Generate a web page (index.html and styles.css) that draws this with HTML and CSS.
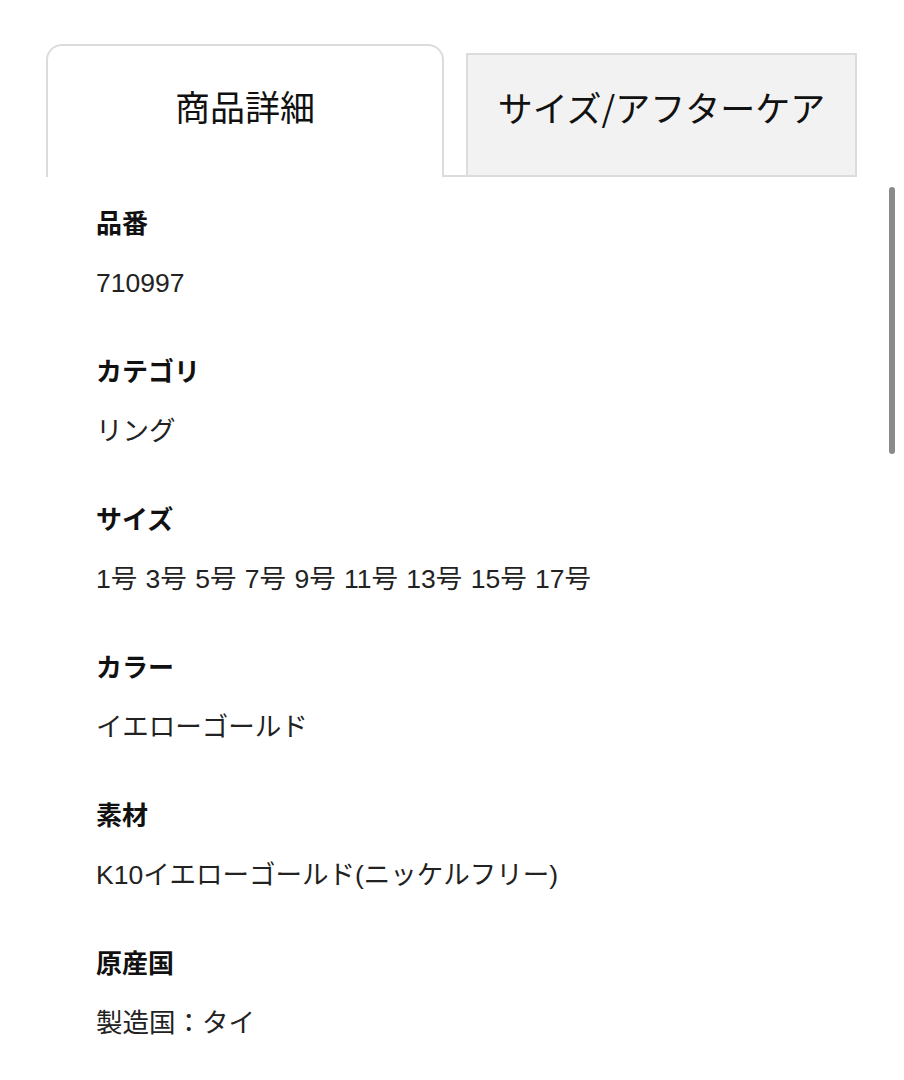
FILE: index.html
```html
<!DOCTYPE html>
<html lang="ja">
<head>
<meta charset="utf-8">
<link rel="stylesheet" href="styles.css">
</head>
<body>
<div class="page">
  <div class="tabs">
    <div class="tab tab-active">商品詳細</div>
    <div class="tab-gap"></div>
    <div class="tab tab-inactive">サイズ/アフターケア</div>
  </div>
  <dl class="details">
    <div class="item"><dt>品番</dt><dd>710997</dd></div>
    <div class="item"><dt>カテゴリ</dt><dd>リング</dd></div>
    <div class="item"><dt>サイズ</dt><dd>1号 3号 5号 7号 9号 11号 13号 15号 17号</dd></div>
    <div class="item"><dt>カラー</dt><dd>イエローゴールド</dd></div>
    <div class="item"><dt>素材</dt><dd>K10イエローゴールド(ニッケルフリー)</dd></div>
    <div class="item"><dt>原産国</dt><dd>製造国：タイ</dd></div>
  </dl>
  <div class="scrollbar"></div>
</div>
</body>
</html>
```

FILE: styles.css
```css
html, body {
  margin: 0;
  padding: 0;
  background: #fff;
}
body {
  font-family: "Liberation Sans", "Noto Sans CJK JP", sans-serif;
  color: #222;
}
.page {
  position: relative;
  width: 904px;
  height: 1080px;
  overflow: hidden;
}
.tabs {
  display: flex;
  align-items: flex-end;
  padding: 44px 0 0 46px;
}
.tab {
  box-sizing: border-box;
  display: flex;
  align-items: center;
  justify-content: center;
  font-family: "Noto Sans CJK JP", sans-serif;
  font-size: 35px;
  color: #111;
}
.tab-active {
  width: 398px;
  height: 133px;
  border: 2px solid #dcdcdc;
  border-bottom: none;
  border-radius: 16px 16px 0 0;
  padding-bottom: 12px;
}
.tab-gap {
  width: 22px;
  height: 0;
  border-bottom: 2px solid #dcdcdc;
}
.tab-inactive {
  width: 391px;
  height: 124px;
  border: 2px solid #dcdcdc;
  background: #f2f2f2;
  padding-bottom: 18px;
}
.details {
  margin: 25px 0 0 96px;
  padding: 0;
}
.item {
  margin-bottom: 47px;
}
dt {
  font-family: "Noto Sans CJK JP", sans-serif;
  font-weight: 700;
  font-size: 26px;
  line-height: 39px;
  height: 39px;
  color: #111;
}
dd {
  margin: 23px 0 0 0;
  font-size: 26.5px;
  word-spacing: 1px;
  line-height: 39px;
  height: 39px;
  color: #222;
}
.scrollbar {
  position: absolute;
  left: 889px;
  top: 187px;
  width: 6px;
  height: 267px;
  border-radius: 3px;
  background: #8a8a8a;
}
```
